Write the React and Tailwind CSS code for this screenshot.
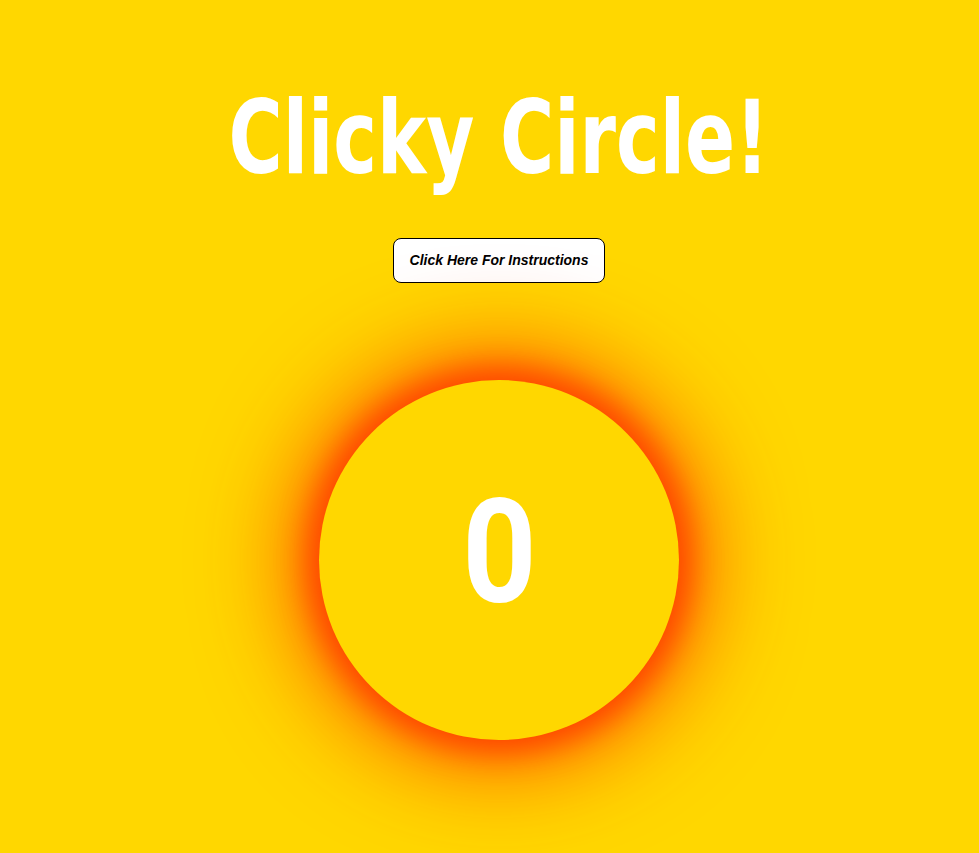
export default function App() {
  return (
    <div className="min-h-[853px] w-full bg-[#ffd700] flex flex-col items-center overflow-hidden pl-[19px]">
      <h1 className="mt-[68px] text-white text-[102px] leading-[140px] font-bold scale-x-[0.805] whitespace-nowrap font-['DejaVu_Sans_Condensed','DejaVu_Sans',sans-serif]">
        Clicky Circle!
      </h1>
      <button className="mt-[30px] h-[45px] px-[16px] bg-white border border-black rounded-[8px] text-[14px] font-bold italic text-black font-['Liberation_Sans',Arial,sans-serif]">
        Click Here For Instructions
      </button>
      <div className="mt-[97px] w-[360px] h-[360px] rounded-full bg-[#ffd700] shadow-[0_0_30px_10px_#ff4500,0_0_100px_20px_#ff4500] flex items-center justify-center">
        <span className="mb-[14px] text-white text-[144px] font-bold leading-none scale-x-[0.9] font-['Roboto',sans-serif]">0</span>
      </div>
    </div>
  );
}
